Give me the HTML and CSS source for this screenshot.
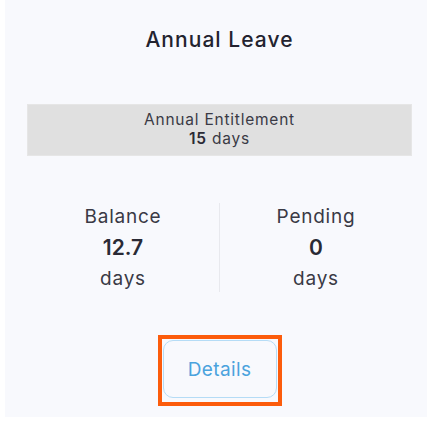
FILE: index.html
```html
<!DOCTYPE html>
<html>
<head>
<meta charset="utf-8">
<link rel="stylesheet" href="styles.css">
</head>
<body>
<div class="card">
  <h2 class="title">Annual Leave</h2>
  <div class="entitlement">
    <div class="ent-label">Annual Entitlement</div>
    <div class="ent-value"><b>15</b> days</div>
  </div>
  <div class="stats">
    <div class="stat">
      <div class="stat-label">Balance</div>
      <div class="stat-value">12.7</div>
      <div class="stat-unit">days</div>
    </div>
    <div class="divider"></div>
    <div class="stat">
      <div class="stat-label">Pending</div>
      <div class="stat-value">0</div>
      <div class="stat-unit">days</div>
    </div>
  </div>
  <div class="actions">
    <div class="focus-ring">
      <button class="details">Details</button>
    </div>
  </div>
</div>
</body>
</html>
```

FILE: styles.css
```css
html, body {
  margin: 0;
  padding: 0;
  background: #ffffff;
}
body {
  font-family: "Inter", "Noto Sans", "Liberation Sans", sans-serif;
  color: #2f2f3a;
}
.card {
  margin-left: 5px;
  width: 422px;
  height: 417px;
  background: #f8f9fd;
  display: flex;
  flex-direction: column;
}
.title {
  margin: 0 15px 0 22px;
  padding-top: 27px;
  height: 104px;
  box-sizing: border-box;
  text-align: center;
  font-size: 21px;
  font-weight: 500;
  line-height: 26px;
  letter-spacing: 0.05em;
  color: #23232f;
}
.entitlement {
  margin: 0 15px 0 22px;
  height: 52px;
  box-sizing: border-box;
  background: #e0e0e0;
  border: 1px solid #e6e6e6;
  text-align: center;
  font-size: 15.5px;
  line-height: 19px;
  letter-spacing: 0.05em;
  color: #3a3a45;
  padding-top: 5px;
}
.ent-value b {
  font-weight: 600;
  color: #2a2a35;
}
.stats {
  margin: 47px 15px 0 22px;
  display: flex;
  height: 89px;
}
.stat {
  flex: 1;
  display: flex;
  flex-direction: column;
  align-items: center;
  font-size: 19px;
  line-height: 31px;
  letter-spacing: 0.04em;
  margin-top: -2px;
  color: #3a3a45;
}
.stat-value {
  font-size: 21px;
  font-weight: 600;
  letter-spacing: 0;
  color: #2a2a35;
}
.divider {
  width: 1px;
  background: #e8e9ee;
}
.actions {
  margin: 43px 15px 0 22px;
  display: flex;
  justify-content: center;
}
.focus-ring {
  border: 4px solid #fc5c0c;
  padding: 1px 1px 4px 1px;
  display: flex;
}
.details {
  width: 114px;
  height: 58px;
  background: #f8f9fd;
  border: 1.5px solid #b5dcf6;
  border-radius: 10px;
  font-family: inherit;
  font-size: 19px;
  letter-spacing: 0.02em;
  color: #4ba3dd;
  padding: 0;
}
```
